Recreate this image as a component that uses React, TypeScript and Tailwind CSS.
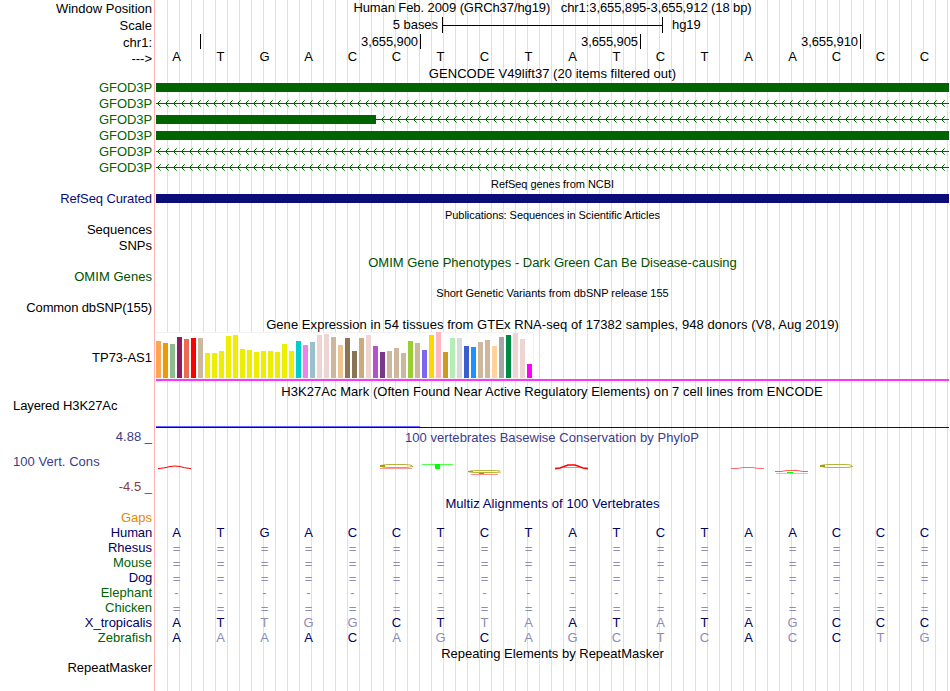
import clsx from "clsx";

const GENOME = "ATGACCTCTATCTAACCC";

const labels = [
    { text: "Window Position", className: "h-[17px]" },
    { text: "Scale", className: "h-[17px]" },
    { text: "chr1:", className: "h-[17px]" },
    { text: "--->", className: "h-[16px]" },
    { text: "GFOD3P", className: "h-[29px] text-[#006400] tracking-[-0.08px]" },
    { text: "GFOD3P", className: "h-[16px] text-[#006400] tracking-[-0.08px]" },
    { text: "GFOD3P", className: "h-[16px] text-[#006400] tracking-[-0.08px]" },
    { text: "GFOD3P", className: "h-[16px] text-[#006400] tracking-[-0.08px]" },
    { text: "GFOD3P", className: "h-[16px] text-[#006400] tracking-[-0.08px]" },
    { text: "GFOD3P", className: "h-[16px] text-[#006400] tracking-[-0.08px]" },
    { text: "RefSeq Curated", className: "h-[31px] text-[#0c0c78] tracking-[-0.1px]" },
    { text: "Sequences", className: "h-[31px]" },
    { text: "SNPs", className: "h-[16px]" },
    { text: "OMIM Genes", className: "h-[31px] text-[#005000] tracking-[0.05px]" },
    { text: "Common dbSNP(155)", className: "h-[31px] tracking-[-0.13px]" },
    { text: "TP73-AS1", className: "h-[50px]" },
    { text: "Layered H3K27Ac", className: "h-[48px] justify-start! pl-[13px] tracking-[-0.08px]" },
    { text: "4.88 _", className: "h-[31px] text-[#3c3c8c]" },
    { text: "100 Vert. Cons", className: "h-[25px] justify-start! pl-[13px] text-[#3c3c8c] tracking-[0.05px]" },
    { text: "-4.5 _", className: "h-[25px] text-[#8c3c3c]" },
    { text: "Gaps", className: "h-[31px] text-[#e68a00]" },
    { text: "Human", className: "h-[15px] text-[#000064] tracking-[-0.15px]" },
    { text: "Rhesus", className: "h-[15px] text-[#000064]" },
    { text: "Mouse", className: "h-[15px] text-[#006400]" },
    { text: "Dog", className: "h-[15px] text-[#000064] tracking-[-0.2px]" },
    { text: "Elephant", className: "h-[15px] text-[#006400]" },
    { text: "Chicken", className: "h-[15px] text-[#006400]" },
    { text: "X_tropicalis", className: "h-[15px] text-[#000064]" },
    { text: "Zebrafish", className: "h-[15px] text-[#006400]" },
    { text: "RepeatMasker", className: "h-[30px]" },
];

const alignments = [
    "==================",
    "==================",
    "==================",
    "------------------",
    "==================",
    "ATTGGCTTAATATAGCCC",
    "AAAACAGCAGCTCACCTG",
];

// [height, tissue colour]
const tissues: [number, string][] = [
    [37, "#ffa54f"], [35, "#ee9a00"], [34, "#8fbc8f"], [41, "#8b1c62"], [39, "#ee6a50"], [40, "#ff0000"],
    [40, "#cdb79e"], [25, "#eeee00"], [25, "#eeee00"], [27, "#eeee00"], [42, "#eeee00"], [43, "#eeee00"],
    [29, "#eeee00"], [28, "#eeee00"], [26, "#eeee00"], [27, "#eeee00"], [27, "#eeee00"], [26, "#eeee00"],
    [34, "#eeee00"], [27, "#eeee00"], [37, "#00cdcd"], [33, "#ee82ee"], [36, "#9ac0cd"], [43, "#eed5d2"],
    [44, "#eed5d2"], [41, "#cdb79e"], [33, "#eec591"], [40, "#8b7355"], [27, "#8b7355"], [40, "#cdaa7d"],
    [43, "#eed5d2"], [32, "#b452cd"], [26, "#7a378b"], [27, "#cdb79e"], [30, "#cdb79e"], [25, "#cdb79e"],
    [37, "#9acd32"], [35, "#cdb79e"], [28, "#7a67ee"], [43, "#ffd700"], [46, "#ffb6c1"], [26, "#cd9b1d"],
    [40, "#b4eeb4"], [40, "#d9d9d9"], [32, "#3a5fcd"], [31, "#1e90ff"], [36, "#cdb79e"], [38, "#cdb79e"],
    [32, "#ffd39b"], [41, "#a6a6a6"], [43, "#008b45"], [45, "#eed5d2"], [39, "#eed5d2"], [14, "#ff00ff"],
];

function Title({ className, children }: { className: string; children: string }) {
    return (
        <div className={clsx("flex shrink-0 items-end justify-center whitespace-pre", className)}>
            <span>{children}</span>
        </div>
    );
}

function Bases({ seq, className, compare }: { seq: string; className: string; compare?: boolean }) {
    return (
        <div className={clsx("-ml-[1.5px] flex shrink-0 items-end", className)}>
            {seq.split("").map((base, i) => (
                <span
                    key={i}
                    className={clsx(
                        "w-11 shrink-0 text-center",
                        compare && base !== GENOME[i] && "text-[#8c8cb8]",
                        base === "=" && "translate-y-px",
                    )}
                >
                    {base}
                </span>
            ))}
        </div>
    );
}

function Gene({ exon }: { exon: number }) {
    const tips = Array.from({ length: 100 }, (_, i) => 1 + i * 8).filter((x) => x > exon);
    return (
        <div className="h-[16px] shrink-0 pt-px">
            <svg width="793" height="9" className="block" shapeRendering="crispEdges">
                <rect width={exon} height="9" fill="#006400" />
                <rect x={exon} y="4" width={793 - exon} height="1" fill="#006400" />
                {tips.map((x) => (
                    <path
                        key={x}
                        d={`M${x + 3.7} 1.3L${x + 0.5} 4.5L${x + 3.7} 7.7`}
                        fill="none"
                        stroke="#006400"
                        shapeRendering="auto"
                    />
                ))}
            </svg>
        </div>
    );
}

function Conservation() {
    return (
        <svg width="793" height="50" viewBox="156 446 793 50" className="block shrink-0" fill="none">
            <path d="M158 468.6Q166 468 170 466.5Q175 465.6 180 466.5Q184 468 191 468.6" stroke="#ff0000" />
            <path d="M412 465.5Q409 464.5 404 464.5H389Q381 464.8 380.5 466Q382 467.5 389 467.5H404Q410 467.3 413 466.4" stroke="#b4b43c" />
            <path d="M380 466H385" stroke="#a0a000" strokeWidth="2" />
            <path d="M380 468.5H412" stroke="#ff9696" />
            <path d="M422 464.5H453" stroke="#50ff50" />
            <path d="M435 466.5H440" stroke="#00ff00" strokeWidth="5" />
            <path d="M500 471Q497 470.5 492 470.5H477Q469 470.7 468.5 471.6Q471 472.5 477 472.5H492Q498 472.5 501 472" stroke="#b4b43c" />
            <path d="M468 471.6H473" stroke="#a0a000" />
            <path d="M471 474.4H498" stroke="#ff8080" />
            <path d="M479 473.5H484" stroke="#00e600" />
            <path d="M555 468.6L560 468L568 465H575L583 468L588 468.6" stroke="#ff0000" strokeWidth="1.6" />
            <path d="M564 467.5H579" stroke="#ff5050" strokeWidth="0.7" />
            <path d="M731 468.5H737L743 467.5H753L758 468.5H764" stroke="#ff5a5a" strokeWidth="0.9" />
            <path d="M775 471.5H781L787 470.5H797L803 471.5H808" stroke="#ff5a5a" />
            <path d="M776 473.5H808" stroke="#c8d2a0" />
            <path d="M787 472.5H793" stroke="#00ff00" />
            <path d="M852 465.5Q850 464.5 845 464.5H829Q821 464.8 820.5 466Q822 467.5 829 467.5H845Q851 467.3 853 466.4" stroke="#b4b43c" />
            <path d="M820 466H825" stroke="#a0a000" strokeWidth="2" />
        </svg>
    );
}

export default function App() {
    return (
        <div className="flex h-[691px] w-[950px] overflow-hidden bg-white font-['Liberation_Sans',Arial,sans-serif] text-[13px] leading-4 text-black">
            <div className="flex w-[154px] shrink-0 flex-col pr-[2px]">
                {labels.map(({ text, className }, i) => (
                    <div key={i} className={clsx("flex shrink-0 items-end justify-end whitespace-pre", className)}>
                        <span>{text}</span>
                    </div>
                ))}
            </div>

            <div className="w-[795px] shrink-0 border-l border-[#ffb4b4] pl-px">
                <div className="flex h-full w-[793px] flex-col bg-[linear-gradient(to_right,#dcdcff_1px,transparent_1px)] bg-[length:12px_100%] bg-[position:11px_0]">
                    <Title className="h-[16px] tracking-[-0.09px]">Human Feb. 2009 (GRCh37/hg19)   chr1:3,655,895-3,655,912 (18 bp)</Title>

                    {/* scale bar */}
                    <div className="flex h-[17px] shrink-0 items-end">
                        <span className="w-[286px] pr-[4px] text-right tracking-[-0.05px]">5 bases</span>
                        <div className="flex h-[16px] w-[221px] items-center border-x border-black">
                            <div className="h-px w-full bg-black" />
                        </div>
                        <span className="pl-[9px] tracking-[-0.1px]">hg19</span>
                    </div>
                    <div className="flex h-[16px] shrink-0 pt-px text-right tracking-[-0.1px]">
                        <div className="h-[15px] w-[45px] border-r border-black" />
                        <div className="h-[15px] w-[220px] border-r border-black pr-[2px]">3,655,900</div>
                        <div className="h-[15px] w-[220px] border-r border-black pr-[2px]">3,655,905</div>
                        <div className="h-[15px] w-[220px] border-r border-black pr-[2px]">3,655,910</div>
                    </div>
                    <Bases seq={GENOME} className="h-[16px]" />

                    <Title className="h-[17px] tracking-[0.04px]">GENCODE V49lift37 (20 items filtered out)</Title>
                    <Gene exon={793} />
                    <Gene exon={0} />
                    <Gene exon={220} />
                    <Gene exon={793} />
                    <Gene exon={0} />
                    <Gene exon={0} />

                    <Title className="h-[14px] text-[11px] leading-4 tracking-[-0.05px]">RefSeq genes from NCBI</Title>
                    <div className="mt-[2px] h-[9px] shrink-0 bg-[#0c0c78]" />
                    <Title className="h-[20px] text-[11px] leading-4 tracking-[-0.06px]">Publications: Sequences in Scientific Articles</Title>
                    <Title className="h-[48px] text-[#005000]">OMIM Gene Phenotypes - Dark Green Can Be Disease-causing</Title>
                    <Title className="h-[30px] text-[11px] leading-4 tracking-[-0.02px]">Short Genetic Variants from dbSNP release 155</Title>

                    <Title className="h-[32px] tracking-[0.06px]">Gene Expression in 54 tissues from GTEx RNA-seq of 17382 samples, 948 donors (V8, Aug 2019)</Title>
                    <div className="-mt-px flex h-[47px] w-[378px] shrink-0 items-end gap-[2px] border-y border-r border-[#f2f2f2] bg-white">
                        {tissues.map(([height, color], i) => (
                            <div key={i} className="w-[5px] shrink-0" style={{ height, backgroundColor: color }} />
                        ))}
                    </div>
                    <div className="h-[2px] shrink-0 bg-[#ff32ff]" />

                    <Title className="h-[19px] pr-px tracking-[0.045px]">H3K27Ac Mark (Often Found Near Active Regulatory Elements) on 7 cell lines from ENCODE</Title>
                    <div className="mt-[26px] h-px w-[264px] shrink-0 bg-[#6464ff]" />
                    <div className="h-px shrink-0 bg-[#14142d]" />

                    <Title className="h-[18px] pr-px tracking-[0.04px] text-[#3c3c8c]">100 vertebrates Basewise Conservation by PhyloP</Title>
                    <Conservation />

                    <Title className="h-[16px] tracking-[0.09px] text-[#000064]">Multiz Alignments of 100 Vertebrates</Title>
                    <Bases seq={GENOME} className="h-[29px] text-[#000064]" />
                    {alignments.map((seq, i) => (
                        <Bases key={i} seq={seq} className="h-[15px] text-[#000064]" compare />
                    ))}
                    <Title className="h-[16px]">Repeating Elements by RepeatMasker</Title>
                </div>
            </div>
        </div>
    );
}
